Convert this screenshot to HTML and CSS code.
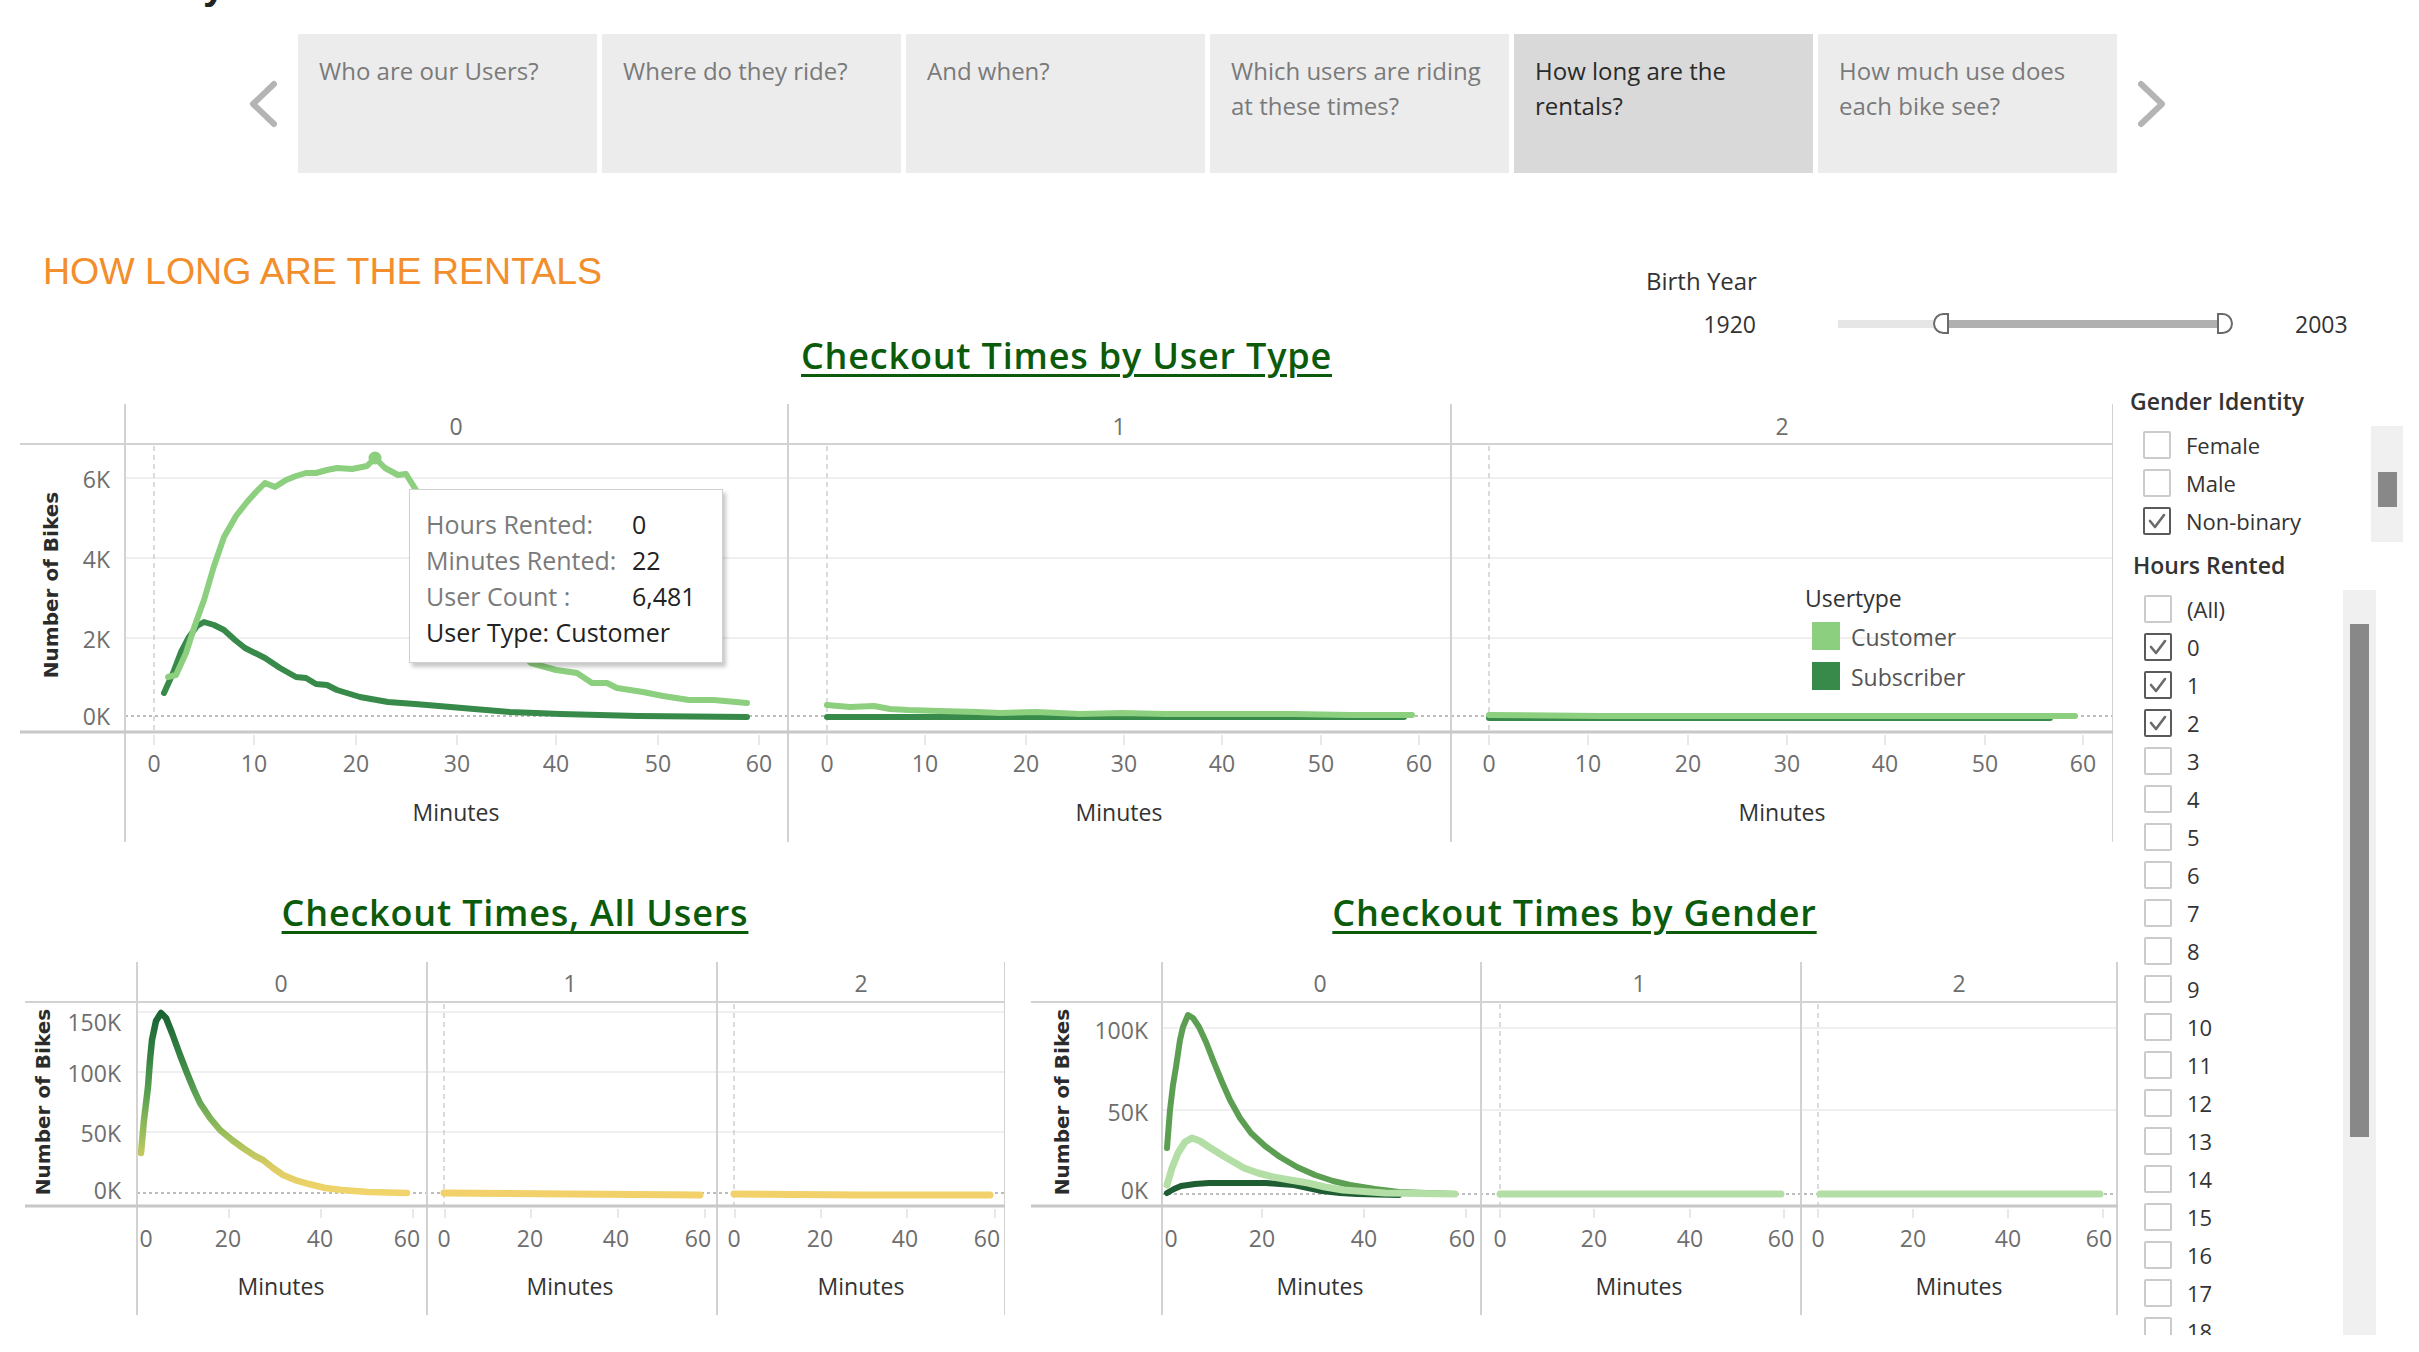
FILE: index.html
```html
<!DOCTYPE html>
<html lang="en">
<head>
<meta charset="utf-8">
<title>How long are the rentals</title>
<link rel="stylesheet" href="styles.css">
</head>
<body>
<div class="story-title"><span>y</span></div>

<nav class="nav">
  <div class="nav-arrow">
    <svg width="32" height="52" viewBox="0 0 32 52"><polyline class="chev" points="26,6 5,26 26,46"/></svg>
  </div>
  <div class="tabs">
    <div class="tab">Who are our Users?</div>
    <div class="tab">Where do they ride?</div>
    <div class="tab">And when?</div>
    <div class="tab">Which users are riding at these times?</div>
    <div class="tab active">How long are the rentals?</div>
    <div class="tab">How much use does each bike see?</div>
  </div>
  <div class="nav-arrow">
    <svg width="32" height="52" viewBox="0 0 32 52"><polyline class="chev" points="6,6 27,26 6,46"/></svg>
  </div>
</nav>

<div class="header-row">
  <h1 class="page-title">HOW LONG ARE THE RENTALS</h1>
  <div class="birth-year">
    <div class="by-label">Birth Year</div>
    <div class="by-row">
      <div class="by-min">1920</div>
      <div class="track">
        <div class="off"></div><div class="on"></div>
        <div class="handle lo"></div>
        <div class="handle hi"></div>
      </div>
      <div class="by-max">2003</div>
    </div>
  </div>
</div>

<div class="content">
  <div class="charts">
    <section class="top-section">
      <h2 class="chart-title"><span>Checkout Times by User Type</span></h2>
      <div class="chart-wrap">
        <svg width="2093" height="438" viewBox="20 404 2093 438">
          <line class="grid" x1="125" y1="478" x2="2113" y2="478"/>
          <line class="grid" x1="125" y1="558" x2="2113" y2="558"/>
          <line class="grid" x1="125" y1="638" x2="2113" y2="638"/>
          <line class="zero" x1="125" y1="716" x2="2113" y2="716"/>
          <line class="dash" x1="154" y1="446" x2="154" y2="731"/>
          <line class="dash" x1="827" y1="446" x2="827" y2="731"/>
          <line class="dash" x1="1489" y1="446" x2="1489" y2="731"/>

          <line class="sep" x1="125" y1="404" x2="125" y2="842"/>
          <line class="sep" x1="788" y1="404" x2="788" y2="842"/>
          <line class="sep" x1="1451" y1="404" x2="1451" y2="842"/>
          <line class="sep" x1="2113" y1="404" x2="2113" y2="842"/>
          <line class="sep" x1="20" y1="444" x2="2113" y2="444"/>
          <line class="axis" x1="20" y1="732" x2="2113" y2="732"/>

          <text class="ax-head" x="456" y="426">0</text>
          <text class="ax-head" x="1119" y="426">1</text>
          <text class="ax-head" x="1782" y="426">2</text>

          <text class="ax-ylab" x="110" y="479">6K</text>
          <text class="ax-ylab" x="110" y="559">4K</text>
          <text class="ax-ylab" x="110" y="639">2K</text>
          <text class="ax-ylab" x="110" y="716">0K</text>
          <text class="ax-ytitle" x="51" y="585" transform="rotate(-90 51 585)">Number of Bikes</text>

          <g class="tickmarks">
            <line x1="154" y1="735" x2="154" y2="745"/><line x1="254" y1="735" x2="254" y2="745"/><line x1="356" y1="735" x2="356" y2="745"/><line x1="457" y1="735" x2="457" y2="745"/><line x1="556" y1="735" x2="556" y2="745"/><line x1="658" y1="735" x2="658" y2="745"/><line x1="759" y1="735" x2="759" y2="745"/>
            <line x1="827" y1="735" x2="827" y2="745"/><line x1="925" y1="735" x2="925" y2="745"/><line x1="1026" y1="735" x2="1026" y2="745"/><line x1="1124" y1="735" x2="1124" y2="745"/><line x1="1222" y1="735" x2="1222" y2="745"/><line x1="1321" y1="735" x2="1321" y2="745"/><line x1="1419" y1="735" x2="1419" y2="745"/>
            <line x1="1489" y1="735" x2="1489" y2="745"/><line x1="1588" y1="735" x2="1588" y2="745"/><line x1="1688" y1="735" x2="1688" y2="745"/><line x1="1787" y1="735" x2="1787" y2="745"/><line x1="1885" y1="735" x2="1885" y2="745"/><line x1="1985" y1="735" x2="1985" y2="745"/><line x1="2083" y1="735" x2="2083" y2="745"/>
          </g>
          <g class="ax-tick">
            <text x="154" y="763">0</text><text x="254" y="763">10</text><text x="356" y="763">20</text><text x="457" y="763">30</text><text x="556" y="763">40</text><text x="658" y="763">50</text><text x="759" y="763">60</text>
            <text x="827" y="763">0</text><text x="925" y="763">10</text><text x="1026" y="763">20</text><text x="1124" y="763">30</text><text x="1222" y="763">40</text><text x="1321" y="763">50</text><text x="1419" y="763">60</text>
            <text x="1489" y="763">0</text><text x="1588" y="763">10</text><text x="1688" y="763">20</text><text x="1787" y="763">30</text><text x="1885" y="763">40</text><text x="1985" y="763">50</text><text x="2083" y="763">60</text>
          </g>
          <text class="ax-title" x="456" y="812">Minutes</text>
          <text class="ax-title" x="1119" y="812">Minutes</text>
          <text class="ax-title" x="1782" y="812">Minutes</text>

          <polyline class="series s-sub" points="164,693 173,673 181,652 189,637 197,626 204,622 214,625 224,630 235,640 245,648 255,653 265,658 280,668 296,677 306,678 316,684 327,685 337,690 360,697 388,702 415,704 439,706 474,709 510,712 561,714 638,716 747,717"/>
          <polyline class="series s-cust" points="168,677 176,675 186,653 195,625 204,600 214,566 224,537 236,516 247,502 256,492 265,483 275,487 286,480 296,476 306,473 316,473 327,470 337,468 352,469 367,466 375,458 385,468 398,475 406,474 416,490 430,525 450,562 480,605 510,642 531,663 556,670 577,673 592,683 607,683 617,688 643,692 663,696 689,700 714,700 747,703"/>
          <circle class="peak" cx="375" cy="458" r="6.5"/>

          <polyline class="series s-sub" points="827,717 1404,717"/>
          <polyline class="series s-cust" points="827,705 850,707 874,706 890,709 908,710 940,711 977,712 1000,713 1036,712 1080,714 1122,713 1165,714 1207,714 1250,714 1293,714 1350,715 1412,715"/>
          <polyline class="series s-sub" points="1489,718 2050,718"/>
          <polyline class="series s-cust" points="1489,715 1600,716 1750,716 1900,716 2075,716"/>

          <text class="lg-title" x="1805" y="598">Usertype</text>
          <rect x="1812" y="622" width="28" height="28" fill="#8ccf7e"/>
          <text class="lg-item" x="1851" y="637">Customer</text>
          <rect x="1812" y="662" width="28" height="28" fill="#378a49"/>
          <text class="lg-item" x="1851" y="677">Subscriber</text>
        </svg>
        <div class="tooltip">
          <span class="k">Hours Rented:</span><span>0</span>
          <span class="k">Minutes Rented:</span><span>22</span>
          <span class="k">User Count :</span><span>6,481</span>
          <span class="full">User Type: Customer</span>
        </div>
      </div>
    </section>

    <div class="bottom-row">
      <section class="chart-block all">
        <h2 class="chart-title"><span>Checkout Times, All Users</span></h2>
        <svg width="980" height="353" viewBox="25 962 980 353">
          <defs>
            <linearGradient id="valgrad" gradientUnits="userSpaceOnUse" x1="0" y1="1193" x2="0" y2="1013">
              <stop offset="0" stop-color="#f2d46c"/>
              <stop offset="0.14" stop-color="#dccd62"/>
              <stop offset="0.3" stop-color="#a3c25c"/>
              <stop offset="0.55" stop-color="#5aa152"/>
              <stop offset="0.8" stop-color="#2f7e40"/>
              <stop offset="1" stop-color="#1b6332"/>
            </linearGradient>
          </defs>
          <line class="grid" x1="137" y1="1012" x2="1005" y2="1012"/>
          <line class="grid" x1="137" y1="1072" x2="1005" y2="1072"/>
          <line class="grid" x1="137" y1="1132" x2="1005" y2="1132"/>
          <line class="zero" x1="137" y1="1193" x2="1005" y2="1193"/>
          <line class="dash" x1="444" y1="1004" x2="444" y2="1205"/>
          <line class="dash" x1="734" y1="1004" x2="734" y2="1205"/>

          <line class="sep" x1="137" y1="962" x2="137" y2="1315"/>
          <line class="sep" x1="427" y1="962" x2="427" y2="1315"/>
          <line class="sep" x1="717" y1="962" x2="717" y2="1315"/>
          <line class="sep" x1="1005" y1="962" x2="1005" y2="1315"/>
          <line class="sep" x1="25" y1="1002" x2="1005" y2="1002"/>
          <line class="axis" x1="25" y1="1206" x2="1005" y2="1206"/>

          <text class="ax-head" x="281" y="983">0</text>
          <text class="ax-head" x="570" y="983">1</text>
          <text class="ax-head" x="861" y="983">2</text>

          <text class="ax-ylab" x="121" y="1022">150K</text>
          <text class="ax-ylab" x="121" y="1073">100K</text>
          <text class="ax-ylab" x="121" y="1133">50K</text>
          <text class="ax-ylab" x="121" y="1190">0K</text>
          <text class="ax-ytitle" x="43" y="1102" transform="rotate(-90 43 1102)">Number of Bikes</text>

          <g class="tickmarks">
            <line x1="229" y1="1209" x2="229" y2="1218"/><line x1="321" y1="1209" x2="321" y2="1218"/><line x1="413" y1="1209" x2="413" y2="1218"/>
            <line x1="445" y1="1209" x2="445" y2="1218"/><line x1="531" y1="1209" x2="531" y2="1218"/><line x1="618" y1="1209" x2="618" y2="1218"/><line x1="705" y1="1209" x2="705" y2="1218"/>
            <line x1="735" y1="1209" x2="735" y2="1218"/><line x1="821" y1="1209" x2="821" y2="1218"/><line x1="907" y1="1209" x2="907" y2="1218"/><line x1="995" y1="1209" x2="995" y2="1218"/>
          </g>
          <g class="ax-tick">
            <text x="146" y="1238">0</text><text x="228" y="1238">20</text><text x="320" y="1238">40</text><text x="407" y="1238">60</text>
            <text x="444" y="1238">0</text><text x="530" y="1238">20</text><text x="616" y="1238">40</text><text x="698" y="1238">60</text>
            <text x="734" y="1238">0</text><text x="820" y="1238">20</text><text x="905" y="1238">40</text><text x="987" y="1238">60</text>
          </g>
          <text class="ax-title" x="281" y="1286">Minutes</text>
          <text class="ax-title" x="570" y="1286">Minutes</text>
          <text class="ax-title" x="861" y="1286">Minutes</text>

          <polyline class="series s-all" points="141,1153 144,1120 148,1087 150,1060 152,1040 156,1021 161,1013 166,1018 172,1033 180,1055 187,1073 194,1090 200,1103 210,1118 220,1130 232,1140 243,1148 255,1156 263,1160 273,1168 283,1175 295,1180 309,1184 325,1188 342,1190 368,1192 407,1193"/>
          <polyline class="series s-yel" points="444,1193 570,1194 700,1195"/>
          <polyline class="series s-yel" points="734,1194 860,1195 990,1195"/>
        </svg>
      </section>

      <section class="chart-block gender">
        <h2 class="chart-title"><span>Checkout Times by Gender</span></h2>
        <svg width="1087" height="353" viewBox="1031 962 1087 353">
          <line class="grid" x1="1162" y1="1028" x2="2118" y2="1028"/>
          <line class="grid" x1="1162" y1="1110" x2="2118" y2="1110"/>
          <line class="zero" x1="1162" y1="1194" x2="2118" y2="1194"/>
          <line class="dash" x1="1500" y1="1004" x2="1500" y2="1205"/>
          <line class="dash" x1="1818" y1="1004" x2="1818" y2="1205"/>

          <line class="sep" x1="1162" y1="962" x2="1162" y2="1315"/>
          <line class="sep" x1="1481" y1="962" x2="1481" y2="1315"/>
          <line class="sep" x1="1801" y1="962" x2="1801" y2="1315"/>
          <line class="sep" x1="2117" y1="962" x2="2117" y2="1315"/>
          <line class="sep" x1="1031" y1="1002" x2="2118" y2="1002"/>
          <line class="axis" x1="1031" y1="1206" x2="2118" y2="1206"/>

          <text class="ax-head" x="1320" y="983">0</text>
          <text class="ax-head" x="1639" y="983">1</text>
          <text class="ax-head" x="1959" y="983">2</text>

          <text class="ax-ylab" x="1148" y="1030">100K</text>
          <text class="ax-ylab" x="1148" y="1112">50K</text>
          <text class="ax-ylab" x="1148" y="1190">0K</text>
          <text class="ax-ytitle" x="1062" y="1102" transform="rotate(-90 1062 1102)">Number of Bikes</text>

          <g class="tickmarks">
            <line x1="1262" y1="1209" x2="1262" y2="1218"/><line x1="1364" y1="1209" x2="1364" y2="1218"/><line x1="1466" y1="1209" x2="1466" y2="1218"/>
            <line x1="1500" y1="1209" x2="1500" y2="1218"/><line x1="1594" y1="1209" x2="1594" y2="1218"/><line x1="1690" y1="1209" x2="1690" y2="1218"/><line x1="1784" y1="1209" x2="1784" y2="1218"/>
            <line x1="1818" y1="1209" x2="1818" y2="1218"/><line x1="1913" y1="1209" x2="1913" y2="1218"/><line x1="2008" y1="1209" x2="2008" y2="1218"/><line x1="2103" y1="1209" x2="2103" y2="1218"/>
          </g>
          <g class="ax-tick">
            <text x="1171" y="1238">0</text><text x="1262" y="1238">20</text><text x="1364" y="1238">40</text><text x="1462" y="1238">60</text>
            <text x="1500" y="1238">0</text><text x="1594" y="1238">20</text><text x="1690" y="1238">40</text><text x="1781" y="1238">60</text>
            <text x="1818" y="1238">0</text><text x="1913" y="1238">20</text><text x="2008" y="1238">40</text><text x="2099" y="1238">60</text>
          </g>
          <text class="ax-title" x="1320" y="1286">Minutes</text>
          <text class="ax-title" x="1639" y="1286">Minutes</text>
          <text class="ax-title" x="1959" y="1286">Minutes</text>

          <polyline class="series s-gmid" points="1167,1148 1170,1110 1173,1085 1176,1067 1180,1040 1183,1027 1188,1015 1193,1018 1199,1027 1206,1042 1213,1060 1222,1082 1230,1100 1240,1118 1251,1133 1265,1146 1280,1157 1297,1167 1315,1175 1333,1181 1350,1185 1375,1189 1399,1192 1455,1194"/>
          <polyline class="series s-gdark" points="1167,1193 1174,1189 1181,1186 1195,1184 1209,1183 1240,1183 1266,1183 1280,1184 1294,1185 1308,1188 1322,1191 1340,1193 1357,1194 1399,1195"/>
          <polyline class="series s-glight" points="1167,1185 1172,1168 1178,1153 1185,1142 1192,1138 1200,1141 1209,1147 1225,1157 1244,1168 1258,1173 1273,1177 1290,1180 1308,1183 1325,1187 1343,1190 1385,1193 1455,1194"/>
          <polyline class="series s-glight" points="1500,1194 1781,1194"/>
          <polyline class="series s-glight" points="1820,1194 2100,1194"/>
        </svg>
      </section>
    </div>
  </div>

  <aside class="filters">
    <div class="filter gender-filter">
      <h3 class="filter-title">Gender Identity</h3>
      <div class="filter-body">
        <div class="items">
          <div class="row"><span class="cb"></span>Female</div>
          <div class="row"><span class="cb"></span>Male</div>
          <div class="row"><span class="cb checked"><svg width="24" height="24" viewBox="0 0 24 24"><polyline points="5,12 10,18 19,6"/></svg></span>Non-binary</div>
        </div>
        <div class="scroll"><div class="thumb"></div></div>
      </div>
    </div>
    <div class="filter hours-filter">
      <h3 class="filter-title">Hours Rented</h3>
      <div class="filter-body">
        <div class="items">
          <div class="row"><span class="cb"></span>(All)</div>
          <div class="row"><span class="cb checked"><svg width="24" height="24" viewBox="0 0 24 24"><polyline points="5,12 10,18 19,6"/></svg></span>0</div>
          <div class="row"><span class="cb checked"><svg width="24" height="24" viewBox="0 0 24 24"><polyline points="5,12 10,18 19,6"/></svg></span>1</div>
          <div class="row"><span class="cb checked"><svg width="24" height="24" viewBox="0 0 24 24"><polyline points="5,12 10,18 19,6"/></svg></span>2</div>
          <div class="row"><span class="cb"></span>3</div>
          <div class="row"><span class="cb"></span>4</div>
          <div class="row"><span class="cb"></span>5</div>
          <div class="row"><span class="cb"></span>6</div>
          <div class="row"><span class="cb"></span>7</div>
          <div class="row"><span class="cb"></span>8</div>
          <div class="row"><span class="cb"></span>9</div>
          <div class="row"><span class="cb"></span>10</div>
          <div class="row"><span class="cb"></span>11</div>
          <div class="row"><span class="cb"></span>12</div>
          <div class="row"><span class="cb"></span>13</div>
          <div class="row"><span class="cb"></span>14</div>
          <div class="row"><span class="cb"></span>15</div>
          <div class="row"><span class="cb"></span>16</div>
          <div class="row"><span class="cb"></span>17</div>
          <div class="row"><span class="cb"></span>18</div>
        </div>
        <div class="scroll"><div class="thumb"></div></div>
      </div>
    </div>
  </aside>
</div>
</body>
</html>
```

FILE: styles.css
```css
html, body {
  margin: 0;
  padding: 0;
  background: #ffffff;
}
body {
  width: 2419px;
  height: 1352px;
  overflow: hidden;
  font-family: "Open Sans", "Liberation Sans", sans-serif;
  color: #333;
}

/* cut-off story title above the navigator */
.story-title {
  height: 8px;
  overflow: hidden;
}
.story-title span {
  display: block;
  margin: -35px 0 0 203px;
  font: 700 40px/40px "Liberation Sans", sans-serif;
  color: #222;
}

/* story navigator */
.nav {
  display: flex;
  align-items: center;
  margin-top: 26px;
  padding-left: 240px;
  height: 139px;
}
.nav-arrow {
  width: 48px;
  height: 139px;
  display: flex;
  align-items: center;
  justify-content: center;
}
.chev {
  fill: none;
  stroke: #b4b4b4;
  stroke-width: 6;
  stroke-linecap: round;
  stroke-linejoin: round;
}
.tabs {
  display: flex;
  gap: 5px;
  margin: 0 10px;
}
.tab {
  width: 299px;
  height: 139px;
  box-sizing: border-box;
  padding: 19px 24px 0 21px;
  background: #ececec;
  color: #7a7a7a;
  font: 24px/35px "Open Sans", sans-serif;
}
.tab.active {
  background: #d9d9d9;
  color: #2a2a2a;
}

/* header row */
.header-row {
  display: flex;
  justify-content: space-between;
  height: 165px;
}
.page-title {
  margin: 80px 0 0 43px;
  font: 400 37.5px/1 "Liberation Sans", sans-serif;
  color: #f28e2b;
}
.birth-year {
  width: 702px;
  margin: 91px 71px 0 0;
}
.by-label {
  font: 500 24px/34px "Open Sans", sans-serif;
  color: #333;
}
.by-row {
  display: flex;
  align-items: center;
  height: 30px;
  margin-top: 11px;
  font: 23px/30px "Open Sans", sans-serif;
  color: #333;
}
.by-min {
  width: 110px;
  text-align: right;
}
.track {
  position: relative;
  display: flex;
  width: 380px;
  height: 8px;
  margin: 0 77px 0 82px;
}
.track .off {
  width: 97px;
  background: #e6e6e6;
}
.track .on {
  flex: 1;
  background: #b0b0b0;
}
.handle {
  position: absolute;
  top: -7px;
  width: 16px;
  height: 21px;
  box-sizing: border-box;
  border: 2px solid #6a6a6a;
  background: #fff;
}
.handle.lo {
  left: 95px;
  border-radius: 11px 0 0 11px;
}
.handle.hi {
  left: 379px;
  border-radius: 0 11px 11px 0;
}

/* main content */
.content {
  display: flex;
}
.charts {
  width: 2120px;
  flex: none;
}
.top-section {
  margin-left: 20px;
  width: 2093px;
}
.chart-title {
  margin: 0;
  height: 66px;
  box-sizing: border-box;
  text-align: center;
  font: 600 36px/36px "Open Sans", sans-serif;
  letter-spacing: 0.8px;
  color: #0b5b0b;
}
.chart-title span {
  text-decoration: underline;
  text-decoration-thickness: 3px;
  text-underline-offset: 5px;
}
.chart-wrap {
  position: relative;
  height: 438px;
}
.chart-wrap svg,
.chart-block svg {
  display: block;
}
.bottom-row {
  display: flex;
  gap: 26px;
  margin-left: 25px;
}
.chart-block.all {
  width: 980px;
}
.chart-block.gender {
  width: 1087px;
}
.chart-block .chart-title {
  height: 120px;
  padding-top: 53px;
}

/* svg chart styling */
.grid {
  stroke: #efefef;
  stroke-width: 2;
}
.zero {
  stroke: #bdbdbd;
  stroke-width: 2;
  stroke-dasharray: 3 3;
}
.dash {
  stroke: #cfcfcf;
  stroke-width: 1.5;
  stroke-dasharray: 5 4;
}
.sep {
  stroke: #d2d2d2;
  stroke-width: 2;
}
.axis {
  stroke: #c8c8c8;
  stroke-width: 3;
}
.tickmarks line {
  stroke: #e0e0e0;
  stroke-width: 1.5;
}
.ax-tick text,
.ax-head,
.ax-ylab {
  font-family: "Open Sans", sans-serif;
  font-size: 23px;
  fill: #6e6e6e;
  text-anchor: middle;
  dominant-baseline: central;
}
.ax-ylab {
  text-anchor: end;
}
.ax-title {
  font-family: "Open Sans", sans-serif;
  font-size: 23px;
  font-weight: 500;
  fill: #333;
  text-anchor: middle;
  dominant-baseline: central;
}
.ax-ytitle {
  font-family: "DejaVu Sans", sans-serif;
  font-size: 20px;
  font-weight: 700;
  fill: #2b2b2b;
  text-anchor: middle;
  dominant-baseline: central;
}
.series {
  fill: none;
  stroke-width: 6;
  stroke-linejoin: round;
  stroke-linecap: round;
}
.s-cust { stroke: #8ccf7e; }
.s-sub { stroke: #378a49; }
.peak { fill: #8ccf7e; }
.s-all { stroke: url(#valgrad); stroke-width: 6.5; }
.s-yel { stroke: #f2d16a; stroke-width: 7; }
.s-gmid { stroke: #5c9f52; }
.s-gdark { stroke: #1f5d33; }
.s-glight { stroke: #b3dea5; stroke-width: 7; }
.lg-title {
  font-family: "Open Sans", sans-serif;
  font-size: 23px;
  font-weight: 500;
  fill: #333;
  dominant-baseline: central;
}
.lg-item {
  font-family: "Open Sans", sans-serif;
  font-size: 23px;
  fill: #555;
  dominant-baseline: central;
}

/* tooltip overlay */
.tooltip {
  position: absolute;
  left: 389px;
  top: 85px;
  width: 314px;
  height: 174px;
  box-sizing: border-box;
  padding: 16px 0 0 16px;
  background: #fff;
  border: 1px solid #d0d0d0;
  box-shadow: 3px 4px 4px rgba(0, 0, 0, 0.22);
  display: grid;
  grid-template-columns: 206px auto;
  align-content: start;
  font: 25px/36px "Open Sans", sans-serif;
  color: #222;
}
.tooltip .k {
  color: #7a7a7a;
}
.tooltip .full {
  grid-column: 1 / -1;
}

/* filters */
.filters {
  flex: 1;
  padding-top: 48px;
}
.filter-title {
  margin: 0 0 0 10px;
  font: 600 23px/30px "Open Sans", sans-serif;
  color: #333;
}
.filter-body {
  display: flex;
  margin-top: 10px;
}
.items {
  box-sizing: border-box;
}
.gender-filter .items {
  width: 251px;
  padding-left: 23px;
}
.gender-filter .scroll {
  width: 32px;
  height: 116px;
  padding: 46px 0 0 7px;
}
.gender-filter .thumb {
  height: 35px;
}
.hours-filter .filter-title {
  margin: 8px 0 0 13px;
}
.hours-filter .filter-body {
  height: 745px;
  overflow: hidden;
}
.hours-filter .items {
  width: 223px;
  padding-left: 24px;
}
.hours-filter .scroll {
  width: 33px;
  height: 745px;
  padding: 34px 0 0 7px;
}
.hours-filter .thumb {
  height: 513px;
}
.scroll {
  box-sizing: border-box;
  background: #f0f0f0;
  flex: none;
}
.thumb {
  width: 19px;
  background: #888;
}
.row {
  display: flex;
  align-items: center;
  gap: 15px;
  height: 38px;
  font: 22px/38px "Open Sans", sans-serif;
  color: #333;
}
.cb {
  flex: none;
  width: 28px;
  height: 28px;
  box-sizing: border-box;
  border: 2px solid #cbcbcb;
  border-radius: 2px;
  display: flex;
  align-items: center;
  justify-content: center;
}
.cb.checked {
  border-color: #5a5a5a;
}
.cb svg polyline {
  fill: none;
  stroke: #6a6a6a;
  stroke-width: 2.6;
  stroke-linecap: round;
  stroke-linejoin: round;
}
```
